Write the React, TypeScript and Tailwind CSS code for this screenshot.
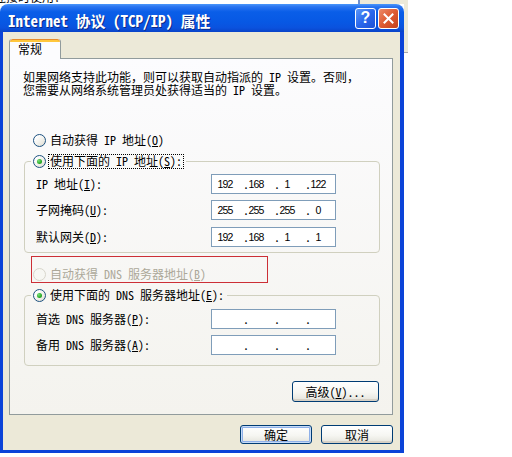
import React from 'react';

function Radio({ checked = false, disabled = false }: { checked?: boolean; disabled?: boolean }) {
  if (disabled) {
    return <span className="w-[13px] h-[13px] shrink-0 rounded-full border border-[#D8D6CC] bg-[#F7F7F3]" />;
  }
  return (
    <span className="w-[13px] h-[13px] shrink-0 rounded-full border border-[#1C5180] bg-[linear-gradient(135deg,#FFFFFF_20%,#ECEBE4_70%,#D6D5CC_100%)] flex items-center justify-center">
      {checked && <span className="w-[5px] h-[5px] rounded-full bg-[radial-gradient(circle_at_35%_35%,#7BE07B_0%,#2BAE2B_55%,#1A8A1A_100%)]" />}
    </span>
  );
}

function Mn({ c }: { c: string }) {
  return (
    <>
      (<span className="underline underline-offset-[1px]">{c}</span>)
    </>
  );
}

function IpBox({ parts }: { parts?: string[] }) {
  const p = parts ?? ['', '', '', ''];
  return (
    <div className="w-[125px] h-[20px] shrink-0 border border-[#7F9DB9] bg-white flex items-center leading-none">
      <span className="ml-[7px] w-[12px] flex justify-center whitespace-nowrap text-[10.5px] tracking-[-0.9px] font-['Liberation_Sans',sans-serif]">{p[0]}</span>
      <span className="w-[6px]" />
      {p.slice(1).map((v, i) => (
        <span key={i} className="flex items-center w-[31px]">
          <span className="w-[12px] flex justify-end">.</span>
          <span className="w-[14px] flex justify-center whitespace-nowrap text-[10.5px] tracking-[-0.9px] font-['Liberation_Sans',sans-serif]">{v}</span>
          <span className="w-[5px]" />
        </span>
      ))}
    </div>
  );
}

function XpButton({ children, isDefault = false, className = '' }: { children: React.ReactNode; isDefault?: boolean; className?: string }) {
  return (
    <div
      className={`${className} border border-[#003C74] rounded-[3px] bg-[linear-gradient(180deg,#FFFFFF_0%,#F6F6F2_55%,#E4E3DB_100%)] flex items-center justify-center leading-none ${
        isDefault ? 'shadow-[inset_0_0_0_1px_#C6DBF7,inset_0_0_0_2px_#8FB0E8]' : 'shadow-[inset_0_-2px_0_#D6D0C5]'
      }`}
    >
      {children}
    </div>
  );
}

function Dialog() {
  return (
    <div className="w-[404px] h-[449px] shrink-0 flex flex-col rounded-t-[8px] overflow-hidden">
      {/* title bar */}
      <div className="h-[28px] shrink-0 flex items-center pl-[8px] pr-[5px] bg-[linear-gradient(180deg,#4A97FA_0%,#2A74F0_10%,#0A5EE8_28%,#0758E4_65%,#0A52DE_85%,#0A43C8_100%)]">
        <span className="mt-[4px] text-[15px] font-bold text-white leading-none whitespace-nowrap [text-shadow:1px_1px_0_#0A2A8A]">
          Internet 协议 (TCP/IP) 属性
        </span>
        <div className="ml-auto flex items-center gap-[2px]">
          <div className="w-[21px] h-[21px] rounded-[3px] border border-white bg-[linear-gradient(135deg,#5C97F8_0%,#2A68EC_50%,#1D52D6_100%)] flex items-center justify-center text-white font-bold text-[16px] leading-none font-['Liberation_Sans',sans-serif]">
            ?
          </div>
          <div className="w-[21px] h-[21px] rounded-[3px] border border-white bg-[linear-gradient(135deg,#EC8A68_0%,#DE5A32_50%,#C2411C_100%)] flex items-center justify-center">
            <svg width="11" height="11" viewBox="0 0 11 11">
              <path d="M1.5 1.5 L9.5 9.5 M9.5 1.5 L1.5 9.5" stroke="white" strokeWidth="2" strokeLinecap="square" />
            </svg>
          </div>
        </div>
      </div>

      {/* body */}
      <div className="flex-1 flex flex-col bg-[#ECE9D8] border-l-[3px] border-r-[4px] border-b-[3px] border-[#0B43D8] pl-[6px] pr-[7px] pt-[7px] pb-[6px]">
        <div className="relative -mb-[1px] w-[52px] h-[20px] rounded-t-[3px] border-x border-[#919B9C] bg-[#FCFCFE] flex flex-col overflow-hidden">
          <div className="h-[3px] border-t border-[#E68B2C] bg-[#FFC73C] rounded-t-[3px]" />
          <div className="pl-[8px] h-[14px] flex items-center leading-none">常规</div>
        </div>

        <div className="h-[357px] border border-[#919B9C] bg-[linear-gradient(180deg,#FCFCFE_0%,#F4F3EE_100%)] flex flex-col">
          <div className="pt-[11px] pl-[13px] leading-[13px] whitespace-nowrap">
            <div>如果网络支持此功能，则可以获取自动指派的 IP 设置。否则，</div>
            <div>您需要从网络系统管理员处获得适当的 IP 设置。</div>
          </div>

          <div className="mt-[36px] h-[16px] flex items-center pl-[23px] gap-[4px] leading-none">
            <Radio />
            <span>自动获得 IP 地址<Mn c="O" /></span>
          </div>

          {/* static IP group */}
          <div className="mt-[13px] ml-[14px] mr-[12px] border border-[#D0D0BF] rounded-[4px] pb-[5px]">
            <div className="-mt-[9px] h-[16px] ml-[6px] pl-[2px] pr-[2px] w-fit flex items-center gap-[2px] bg-[#FAFAF9] leading-none">
              <Radio checked />
              <span className="h-[15px] flex items-center border border-dotted border-black px-[1px]">
                使用下面的 IP 地址<Mn c="S" />:
              </span>
            </div>
            <div className="mt-[5px] h-[20px] flex items-center pl-[11px] leading-none">
              <span className="w-[175px]">IP 地址<Mn c="I" />:</span>
              <IpBox parts={['192', '168', '1', '122']} />
            </div>
            <div className="mt-[6px] h-[20px] flex items-center pl-[11px] leading-none">
              <span className="w-[175px]">子网掩码<Mn c="U" />:</span>
              <IpBox parts={['255', '255', '255', '0']} />
            </div>
            <div className="mt-[7px] h-[20px] flex items-center pl-[11px] leading-none">
              <span className="w-[175px]">默认网关<Mn c="D" />:</span>
              <IpBox parts={['192', '168', '1', '1']} />
            </div>
          </div>

          <div className="mt-[3px] ml-[21px] w-[237px] h-[27px] border border-[#CC2F36] flex items-end pl-[1px]">
            <div className="h-[16px] flex items-center gap-[4px] leading-none text-[#ACA899]">
              <Radio disabled />
              <span>自动获得 DNS 服务器地址<Mn c="B" /></span>
            </div>
          </div>

          {/* DNS group */}
          <div className="mt-[12px] ml-[14px] mr-[12px] border border-[#D0D0BF] rounded-[4px] pb-[10px]">
            <div className="-mt-[9px] h-[16px] ml-[6px] pl-[2px] pr-[3px] w-fit flex items-center gap-[4px] bg-[#F7F6F3] leading-none">
              <Radio checked />
              <span>使用下面的 DNS 服务器地址<Mn c="E" />:</span>
            </div>
            <div className="mt-[6px] h-[20px] flex items-center pl-[11px] leading-none">
              <span className="w-[175px]">首选 DNS 服务器<Mn c="P" />:</span>
              <IpBox />
            </div>
            <div className="mt-[6px] h-[20px] flex items-center pl-[11px] leading-none">
              <span className="w-[175px]">备用 DNS 服务器<Mn c="A" />:</span>
              <IpBox />
            </div>
          </div>

          <XpButton className="mt-[15px] self-end mr-[13px] w-[87px] h-[21px]">
            高级<Mn c="V" />...
          </XpButton>
        </div>

        <div className="mt-[10px] flex justify-end gap-[9px]">
          <XpButton isDefault className="w-[72px] h-[19px]">确定</XpButton>
          <XpButton className="w-[72px] h-[19px]">取消</XpButton>
        </div>
      </div>
    </div>
  );
}

export default function App() {
  return (
    <div className="w-[512px] h-[457px] bg-white overflow-hidden text-[12px] text-black font-['Noto_Sans_Mono_CJK_SC','Noto_Sans_CJK_SC',monospace]">
      {/* window behind the dialog */}
      <div className="flex h-[4px]">
        <div className="w-[358px] overflow-hidden">
          <div className="-mt-[9px] -ml-[6px] leading-[12px] whitespace-nowrap">连接时使用：</div>
        </div>
        <div className="w-[2px] bg-[#6F8FCF]" />
        <div className="w-[48px] bg-[#ECE9D8]" />
      </div>
      <div className="flex">
        <Dialog />
        <div className="flex flex-col w-[4px]">
          <div className="h-[48px] bg-[#ECE9D8]" />
          <div className="h-[1px] bg-[#A7A6AA]" />
        </div>
      </div>
    </div>
  );
}
